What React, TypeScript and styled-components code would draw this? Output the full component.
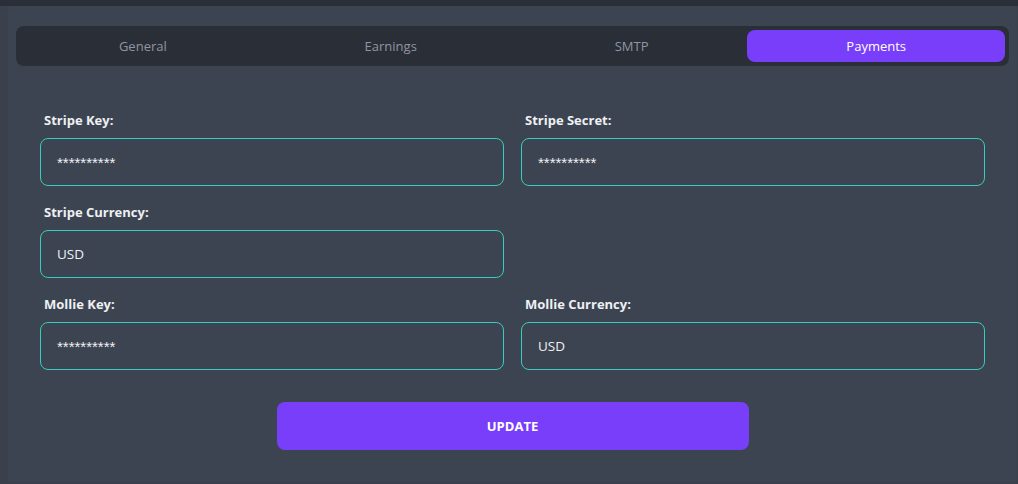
import React, { useState } from 'react';
import styled, { createGlobalStyle } from 'styled-components';

const COLORS = {
  page: '#3a414d',
  base: '#3d4451',
  neutral: '#2a2e37',
  primary: '#793ef9',
  accent: '#37cdbe',
  muted: '#8e96a3',
  text: '#eef0f4',
};

const GlobalStyle = createGlobalStyle`
  html, body {
    margin: 0;
    padding: 0;
    background: ${COLORS.page};
    font-family: 'Open Sans', 'Noto Sans', sans-serif;
  }
  * { box-sizing: border-box; }
`;

const TopBar = styled.div`
  height: 6px;
  background: ${COLORS.neutral};
`;

const Panel = styled.section`
  margin: 0 1px 0 8px;
  background: ${COLORS.base};
  padding: 20px 8px 32px;
  min-height: 476px;
`;

const TabList = styled.div`
  display: flex;
  padding: 4px;
  border-radius: 8px;
  background: ${COLORS.neutral};
`;

const Tab = styled.button<{ $active?: boolean }>`
  flex: 1 1 auto;
  height: 32px;
  border: none;
  border-radius: 8px;
  cursor: pointer;
  font-family: inherit;
  font-size: 13px;
  background: ${(p) => (p.$active ? COLORS.primary : 'transparent')};
  color: ${(p) => (p.$active ? '#ffffff' : COLORS.muted)};
`;

const Form = styled.form`
  padding: 44px 24px 0;
  display: flex;
  flex-direction: column;
`;

const Grid = styled.div`
  display: grid;
  grid-template-columns: 1fr 1fr;
  column-gap: 17px;
  row-gap: 16px;
`;

const Field = styled.label`
  display: flex;
  flex-direction: column;
  gap: 8px;
`;

const Label = styled.span`
  padding-left: 4px;
  font-size: 13px;
  line-height: 20px;
  font-weight: 700;
  color: ${COLORS.text};
`;

const Input = styled.input<{ $masked?: boolean }>`
  height: 48px;
  padding: 0 16px;
  border: 1px solid ${COLORS.accent};
  border-radius: 8px;
  background: transparent;
  color: ${COLORS.text};
  font-family: ${(p) => (p.$masked ? "'Liberation Sans', sans-serif" : 'inherit')};
  font-size: ${(p) => (p.$masked ? '15px' : '13.5px')};
  outline: none;
`;

const Spacer = styled.div``;

const Submit = styled.button`
  align-self: center;
  margin-top: 32px;
  width: 472px;
  height: 48px;
  border: none;
  border-radius: 8px;
  background: ${COLORS.primary};
  color: #ffffff;
  font-family: inherit;
  font-size: 13px;
  font-weight: 700;
  cursor: pointer;
`;

const tabs = ['General', 'Earnings', 'SMTP', 'Payments'];

export default function App() {
  const [active, setActive] = useState('Payments');
  return (
    <>
      <GlobalStyle />
      <TopBar />
      <Panel>
        <TabList>
          {tabs.map((t) => (
            <Tab key={t} $active={t === active} onClick={() => setActive(t)}>
              {t}
            </Tab>
          ))}
        </TabList>
        <Form onSubmit={(e) => e.preventDefault()}>
          <Grid>
            <Field>
              <Label>Stripe Key:</Label>
              <Input $masked defaultValue="**********" />
            </Field>
            <Field>
              <Label>Stripe Secret:</Label>
              <Input $masked defaultValue="**********" />
            </Field>
            <Field>
              <Label>Stripe Currency:</Label>
              <Input defaultValue="USD" />
            </Field>
            <Spacer />
            <Field>
              <Label>Mollie Key:</Label>
              <Input $masked defaultValue="**********" />
            </Field>
            <Field>
              <Label>Mollie Currency:</Label>
              <Input defaultValue="USD" />
            </Field>
          </Grid>
          <Submit type="submit">UPDATE</Submit>
        </Form>
      </Panel>
    </>
  );
}
